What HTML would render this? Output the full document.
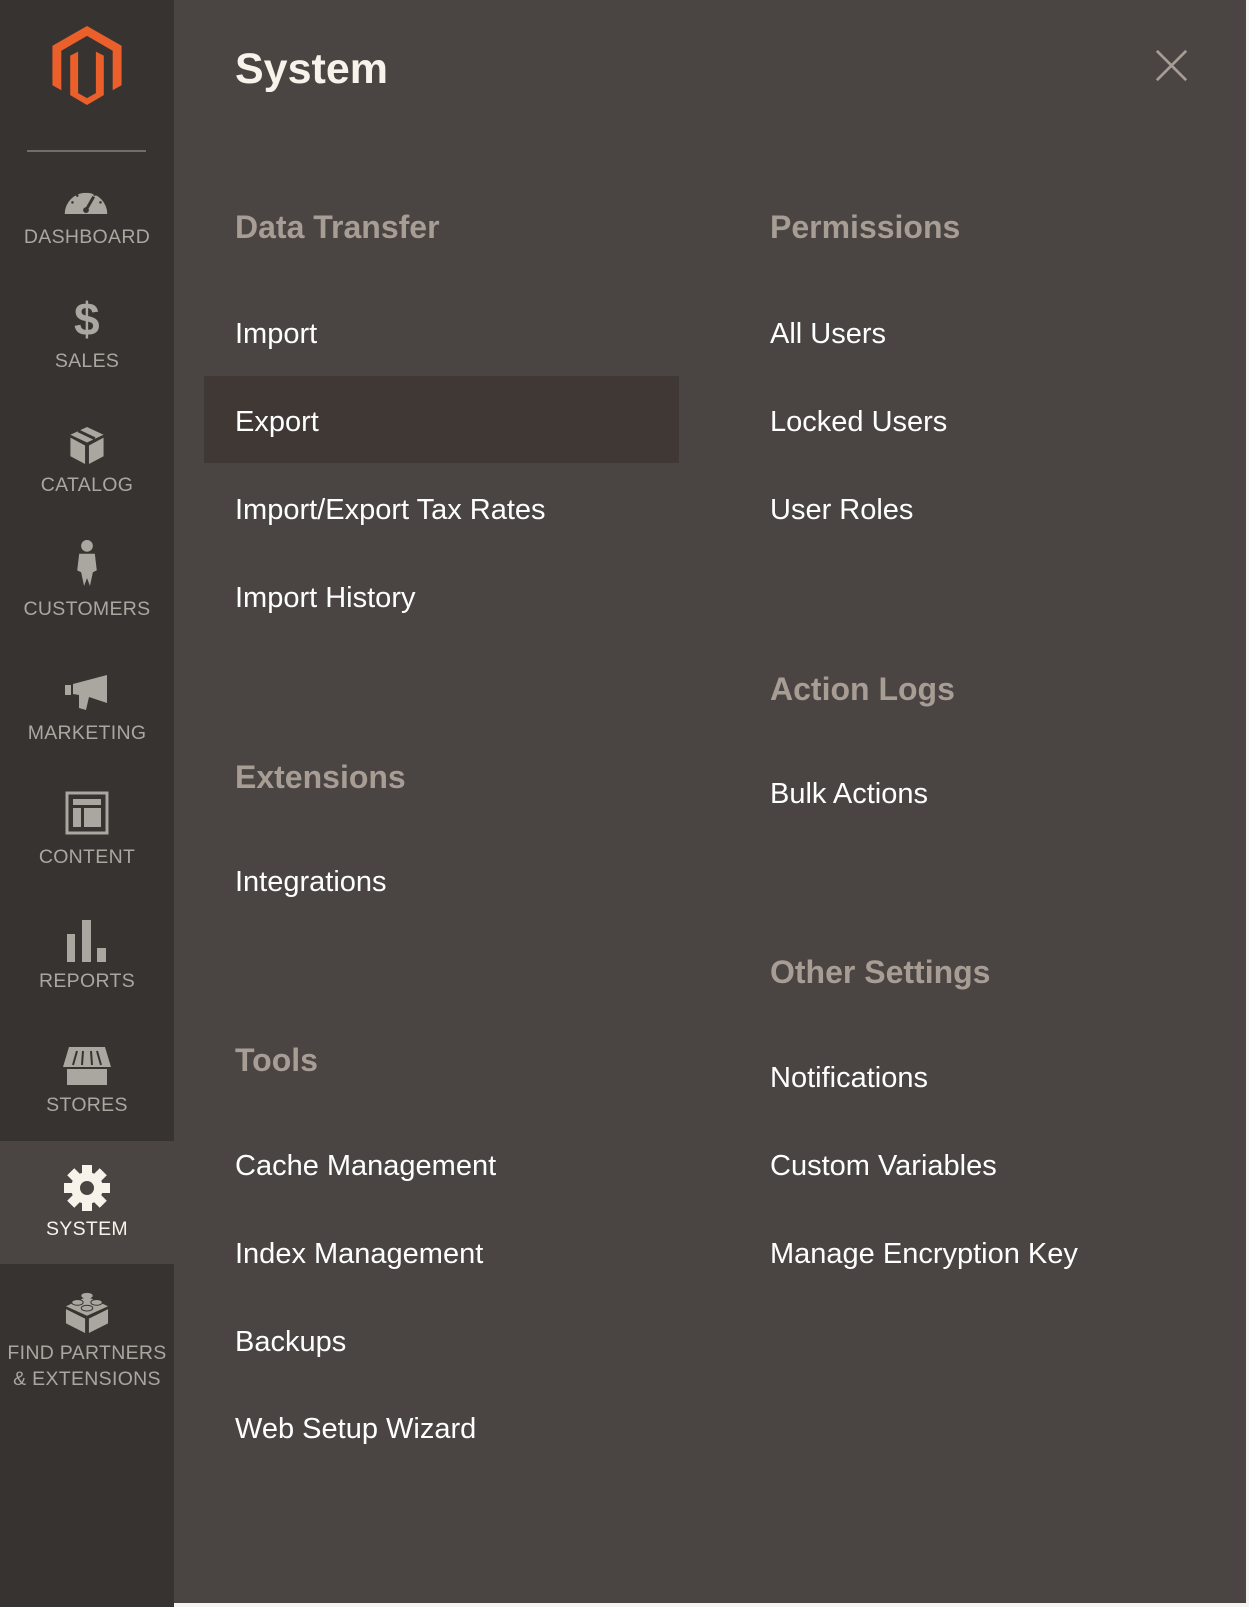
<!DOCTYPE html>
<html><head><meta charset="utf-8"><style>
*{margin:0;padding:0;box-sizing:border-box}
body{width:1249px;height:1607px;background:#f4f4f4;position:relative;overflow:hidden;font-family:"Liberation Sans",sans-serif}
#side{position:absolute;left:0;top:0;width:174px;height:1607px;background:#373330}
#panel{position:absolute;left:174px;top:0;width:1072px;height:1603px;background:#4a4542}
.l{position:absolute;left:0;width:174px;text-align:center;color:#aaa6a0;font-size:19.5px;line-height:24px;letter-spacing:0.3px}
.i{position:absolute}
.t{position:absolute;color:#fff;font-size:29px;line-height:40px;white-space:nowrap}
.h{position:absolute;color:#a79d95;font-size:32px;line-height:40px;font-weight:bold;white-space:nowrap}
</style></head><body>
<div id="side">
<svg class="i" style="left:52px;top:26px" width="70" height="79" viewBox="0 0 70 80"><path fill="#eb5f2b" d="M35 0 L70 20 V60 L61 65 V25 L35 10 L9 25 V65 L0 60 V20 Z M18 30 L26 26 V68 L35 73 L44 68 V26 L52 30 V70 L35 80 L18 70 Z"/></svg>
<div style="position:absolute;left:27px;top:150px;width:119px;height:2px;background:#746c66"></div>
<svg class="i" style="left:64px;top:185px" width="44" height="29" viewBox="0 0 44 30"><path fill="#aaa6a0" d="M0 30 A22 22 0 0 1 44 30 Z"/><path stroke="#373330" stroke-width="3" d="M22 26 L30 12"/><circle cx="22" cy="26" r="3" fill="#373330"/><g fill="#373330"><circle cx="8" cy="18" r="1.3"/><circle cx="13" cy="11" r="1.3"/><circle cx="22" cy="7" r="1.3"/><circle cx="31" cy="10" r="1.3"/><circle cx="37" cy="18" r="1.3"/></g></svg>
<div class="l" style="top:225px">DASHBOARD</div>
<div class="l" style="top:296px;font-size:46px;line-height:46px;font-weight:bold">$</div>
<div class="l" style="top:349px">SALES</div>
<svg class="i" style="left:68px;top:425px" width="38" height="39" viewBox="0 0 38 40"><path fill="#aaa6a0" d="M19 2 L36 10 L19 18 L2 10 Z M2 13 L17 21 V40 L2 32 Z M21 21 L36 13 V32 L21 40 Z"/><path stroke="#373330" stroke-width="3" d="M10 6 L27 14"/></svg>
<div class="l" style="top:473px">CATALOG</div>
<svg class="i" style="left:75px;top:539px" width="24" height="47" viewBox="0 0 24 48"><circle cx="12" cy="7" r="6" fill="#aaa6a0"/><path fill="#aaa6a0" d="M4 15 H20 L22 32 L18 34 L15 48 L12 40 L9 48 L6 34 L2 32 Z"/></svg>
<div class="l" style="top:597px">CUSTOMERS</div>
<svg class="i" style="left:65px;top:675px" width="44" height="36" viewBox="0 0 44 36"><path fill="#aaa6a0" d="M0 10 H6 V20 H0 Z M8 9 L42 0 V28 L24 22 L21 35 L14 33 L14 20 L8 19 Z"/></svg>
<div class="l" style="top:721px">MARKETING</div>
<svg class="i" style="left:65px;top:791px" width="44" height="44" viewBox="0 0 44 44"><rect x="2" y="2" width="40" height="40" fill="none" stroke="#aaa6a0" stroke-width="3"/><rect x="8" y="8" width="28" height="6" fill="#aaa6a0"/><rect x="8" y="17" width="8" height="19" fill="#aaa6a0"/><rect x="19" y="17" width="17" height="19" fill="#aaa6a0"/></svg>
<div class="l" style="top:845px">CONTENT</div>
<svg class="i" style="left:67px;top:920px" width="40" height="42" viewBox="0 0 40 42"><rect x="0" y="14" width="8" height="28" fill="#aaa6a0"/><rect x="15" y="0" width="9" height="42" fill="#aaa6a0"/><rect x="30" y="28" width="9" height="14" fill="#aaa6a0"/></svg>
<div class="l" style="top:969px">REPORTS</div>
<svg class="i" style="left:63px;top:1047px" width="48" height="38" viewBox="0 0 48 38"><path fill="#aaa6a0" d="M6 0 H42 L48 20 H0 Z M4 22 H44 V38 H4 Z"/><path stroke="#373330" stroke-width="2" d="M10 18 L14 4 M19 18 L20 4 M29 18 L28 4 M38 18 L34 4"/></svg>
<div class="l" style="top:1093px">STORES</div>
<div style="position:absolute;left:0;top:1141px;width:174px;height:123px;background:#4a4542"></div>
<svg class="i" style="left:64px;top:1165px" width="46" height="46" viewBox="0 0 46 46"><g fill="#f7f3eb" transform="translate(23 23)"><circle r="16"/><rect x="-5" y="-23" width="10" height="9"/><rect x="-5" y="-23" width="10" height="9" transform="rotate(45)"/><rect x="-5" y="-23" width="10" height="9" transform="rotate(90)"/><rect x="-5" y="-23" width="10" height="9" transform="rotate(135)"/><rect x="-5" y="-23" width="10" height="9" transform="rotate(180)"/><rect x="-5" y="-23" width="10" height="9" transform="rotate(225)"/><rect x="-5" y="-23" width="10" height="9" transform="rotate(270)"/><rect x="-5" y="-23" width="10" height="9" transform="rotate(315)"/></g><circle cx="23" cy="23" r="7" fill="#4a4542"/></svg>
<div class="l" style="top:1217px;color:#f7f3eb">SYSTEM</div>
<svg class="i" style="left:64px;top:1289px" width="46" height="44" viewBox="0 0 46 46"><path fill="#aaa6a0" d="M23 8 L45 18 L23 28 L1 18 Z M1 21 L21 31 V46 L1 36 Z M25 31 L45 21 V36 L25 46 Z"/><ellipse cx="23" cy="7" rx="6" ry="3" fill="#aaa6a0"/><ellipse cx="13" cy="14" rx="6" ry="3" fill="#aaa6a0" stroke="#373330"/><ellipse cx="33" cy="14" rx="6" ry="3" fill="#aaa6a0" stroke="#373330"/><ellipse cx="23" cy="20" rx="6" ry="3" fill="#aaa6a0" stroke="#373330"/></svg>
<div class="l" style="top:1340px;line-height:26px">FIND PARTNERS<br>&amp; EXTENSIONS</div>
</div>
<div id="panel">
<div style="position:absolute;left:30px;top:376px;width:475px;height:87px;background:#3f3834"></div>
<div style="position:absolute;left:61px;top:42px;font-size:43px;line-height:54px;font-weight:bold;color:#f7f3eb">System</div>
<svg style="position:absolute;left:981px;top:49px" width="33" height="33" viewBox="0 0 36 36"><path stroke="#a79d95" stroke-width="3" d="M2 2 L34 34 M34 2 L2 34"/></svg>
<div class="h" style="left:61px;top:207px">Data Transfer</div>
<div class="t" style="left:61px;top:314px">Import</div>
<div class="t" style="left:61px;top:402px">Export</div>
<div class="t" style="left:61px;top:490px">Import/Export Tax Rates</div>
<div class="t" style="left:61px;top:578px">Import History</div>
<div class="h" style="left:61px;top:757px">Extensions</div>
<div class="t" style="left:61px;top:862px">Integrations</div>
<div class="h" style="left:61px;top:1040px">Tools</div>
<div class="t" style="left:61px;top:1146px">Cache Management</div>
<div class="t" style="left:61px;top:1234px">Index Management</div>
<div class="t" style="left:61px;top:1322px">Backups</div>
<div class="t" style="left:61px;top:1409px">Web Setup Wizard</div>
<div class="h" style="left:596px;top:207px">Permissions</div>
<div class="t" style="left:596px;top:314px">All Users</div>
<div class="t" style="left:596px;top:402px">Locked Users</div>
<div class="t" style="left:596px;top:490px">User Roles</div>
<div class="h" style="left:596px;top:669px">Action Logs</div>
<div class="t" style="left:596px;top:774px">Bulk Actions</div>
<div class="h" style="left:596px;top:952px">Other Settings</div>
<div class="t" style="left:596px;top:1058px">Notifications</div>
<div class="t" style="left:596px;top:1146px">Custom Variables</div>
<div class="t" style="left:596px;top:1234px">Manage Encryption Key</div>
</div>
</body></html>
